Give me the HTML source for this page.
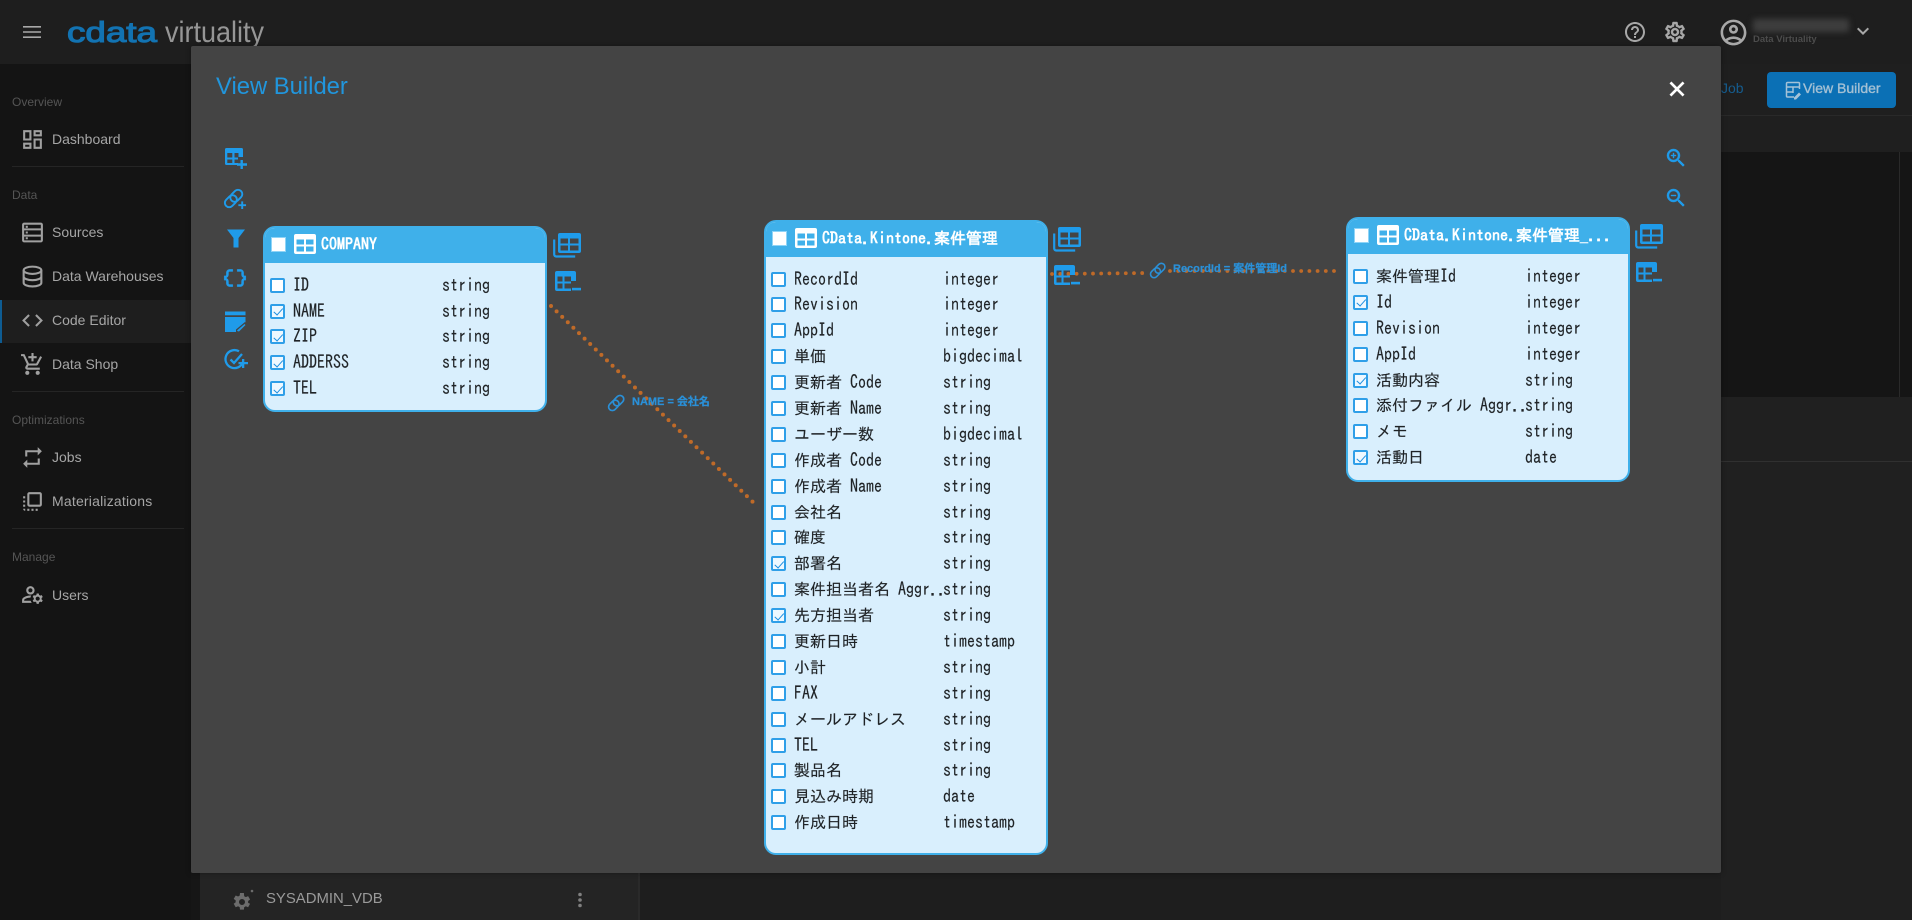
<!DOCTYPE html>
<html lang="ja"><head><meta charset="utf-8"><title>View Builder</title>
<style>
html,body{margin:0;padding:0;width:1912px;height:920px;overflow:hidden;background:#202020;font-family:"Liberation Sans","Noto Sans CJK JP",sans-serif}
.a{position:absolute}
svg{display:block;overflow:visible}
#side div.t{position:absolute;left:52px;font-size:14px;line-height:20px;color:#a6a6a6;white-space:nowrap}
#side div.h{position:absolute;left:12px;font-size:12px;line-height:16px;color:#555;white-space:nowrap}
#side div.s{position:absolute;left:12px;width:172px;height:1px;background:#252525}
#side svg{position:absolute;left:20px;margin-top:-.5px;width:25px;height:25px;fill:#a0a0a0}
.tb{position:absolute;box-sizing:border-box;width:284px;background:#d9effd;border:2.5px solid #3fb0ea;border-radius:12px;font-family:"WenQuanYi Zen Hei Mono","IPAGothic","Noto Sans CJK JP",monospace;font-size:16px;color:#1f2326;overflow:hidden;-webkit-text-stroke:.15px #1f2326}
.hd{position:absolute;left:-3px;right:-3px;top:-3px;height:37.5px;background:#3fb0ea;color:#fff;font-weight:bold;line-height:36px;white-space:nowrap;-webkit-text-stroke:0}
.hd b{position:absolute;left:59px;top:1px}
.hd i{position:absolute;left:9px;top:12px;width:13px;height:13px;background:#fff;border:1px solid #8fd4f7;box-sizing:content-box}
.hd svg{position:absolute;left:32px;top:9px}
.r{position:relative;height:25.9px;line-height:25.9px;white-space:nowrap}
.r u{text-decoration:none;position:absolute;left:28px;top:0}
.r em{font-style:normal;position:absolute;left:177px;top:0;transform:scaleY(1.14)}
.r u.l{transform:scaleY(1.14)}
.r s{text-decoration:none;display:inline-block;transform:scaleY(1.14)}
.k{position:absolute;left:5px;top:5px;width:11px;height:11px;border:2px solid #2f9fe8;border-radius:2px;background:#fff}
.k.on{background:#eef8ff}
.k.on::after{content:"";position:absolute;left:3.5px;top:.5px;width:3.5px;height:7.5px;border-right:1.7px solid #1e8fe0;border-bottom:1.7px solid #1e8fe0;transform:rotate(42deg)}
.lb{position:absolute;font-size:11px;font-weight:bold;color:#2a90d8;white-space:nowrap;line-height:14px;-webkit-text-stroke:.25px #2a90d8}
</style></head><body>

<svg width="0" height="0" style="position:absolute"><defs>
<symbol id="grid" viewBox="0 0 22 20"><path fill="currentColor" fill-rule="evenodd" d="M2 0h18a2 2 0 0 1 2 2v16a2 2 0 0 1-2 2H2a2 2 0 0 1-2-2V2a2 2 0 0 1 2-2zM2.500 5.500v5h7.500v-5zM12 5.500v5h7.500v-5zM2.500 12.500v5h7.500v-5zM12 12.500v5h7.500v-5z"/></symbol>
<symbol id="copyt" viewBox="0 0 28 25"><path d="M1.200 6.500V21.500a2 2 0 0 0 2 2h19" fill="none" stroke="currentColor" stroke-width="2.200"/><path fill="currentColor" fill-rule="evenodd" d="M7 0h19a2 2 0 0 1 2 2v16a2 2 0 0 1-2 2H7a2 2 0 0 1-2-2V2a2 2 0 0 1 2-2zM7.500 5.500v5h7.500v-5zM17 5.500v5h8.500v-5zM7.500 12.500v5h7.500v-5zM17 12.500v5h8.500v-5z"/></symbol>
<symbol id="mint" viewBox="0 0 26 20"><path fill="currentColor" fill-rule="evenodd" d="M2 0h17a2 2 0 0 1 2 2v8h-5v-4.500h-6.500v5H16v2h-6.500v5H16V20H2a2 2 0 0 1-2-2V2a2 2 0 0 1 2-2zM2.500 5.500v5h5v-5zM2.500 12.500v5h5v-5z"/><path d="M17 16.800h9v2.600h-9z" fill="currentColor"/></symbol>
<symbol id="lnk" viewBox="0 0 24 24"><g fill="none" stroke="currentColor" stroke-width="2" transform="rotate(-45 11 12)"><rect x="0" y="7.500" width="14" height="9" rx="4.500"/><rect x="8" y="7.500" width="14" height="9" rx="4.500"/></g></symbol>
</defs></svg>

<!-- top bar -->
<div class="a" style="left:0;top:0;width:1912px;height:64px;background:#1e1e1e"></div>
<svg class="a" style="left:23px;top:26px" width="18" height="12"><path d="M0 .8h18M0 6h18M0 11.200h18" stroke="#a8a8a8" stroke-width="1.600"/></svg>
<svg class="a" style="left:64px;top:16px" width="204" height="34">
<text x="3" y="26" font-family="'Liberation Sans',sans-serif" font-size="29" fill="#1273b2" stroke="#1273b2" stroke-width="1.100" textLength="90" lengthAdjust="spacingAndGlyphs">cdata</text>
<text x="101" y="26" font-family="'Liberation Sans',sans-serif" font-size="30" fill="#969696" textLength="99" lengthAdjust="spacingAndGlyphs">virtuality</text></svg>
<svg class="a" style="left:1623px;top:20px;fill:#a8a8a8" width="24" height="24" viewBox="0 0 24 24"><path d="M11 18h2v-2h-2v2zm1-16C6.480 2 2 6.480 2 12s4.480 10 10 10 10-4.480 10-10S17.520 2 12 2zm0 18c-4.410 0-8-3.590-8-8s3.590-8 8-8 8 3.590 8 8-3.590 8-8 8zm0-14c-2.210 0-4 1.790-4 4h2c0-1.100.9-2 2-2s2 .9 2 2c0 2-3 1.750-3 5h2c0-2.250 3-2.500 3-5 0-2.210-1.790-4-4-4z"/></svg>
<svg class="a" style="left:1663px;top:20px;fill:#a8a8a8;stroke:#a8a8a8;stroke-width:.4" width="24" height="24" viewBox="0 0 24 24"><path d="M19.430 12.980c.04-.32.07-.64.07-.98 0-.34-.03-.66-.07-.98l2.110-1.650c.19-.15.24-.42.12-.64l-2-3.460c-.09-.16-.26-.25-.44-.25-.06 0-.12.01-.17.03l-2.490 1c-.52-.4-1.080-.73-1.690-.98l-.38-2.650C14.460 2.180 14.250 2 14 2h-4c-.25 0-.46.18-.49.42l-.38 2.650c-.61.25-1.170.59-1.690.98l-2.490-1c-.06-.02-.12-.03-.18-.03-.17 0-.34.09-.43.25l-2 3.460c-.13.22-.07.49.12.64l2.110 1.650c-.04.32-.07.65-.07.98 0 .33.03.66.07.98l-2.110 1.650c-.19.15-.24.42-.12.64l2 3.460c.09.16.26.25.44.25.06 0 .12-.01.17-.03l2.490-1c.52.4 1.080.73 1.690.98l.38 2.650c.03.24.24.42.49.42h4c.25 0 .46-.18.49-.42l.38-2.650c.61-.25 1.170-.59 1.690-.98l2.490 1c.06.02.12.03.18.03.17 0 .34-.09.43-.25l2-3.460c.12-.22.07-.49-.12-.64l-2.110-1.650zm-1.980-1.710c.04.31.05.52.05.73 0 .21-.02.43-.05.73l-.14 1.130.89.7 1.080.84-.7 1.210-1.270-.51-1.040-.42-.9.68c-.43.32-.84.56-1.250.73l-1.060.43-.16 1.130-.2 1.350h-1.400l-.19-1.350-.16-1.130-1.060-.43c-.43-.18-.83-.41-1.230-.71l-.91-.7-1.060.43-1.270.51-.7-1.210 1.080-.84.89-.7-.14-1.130c-.03-.31-.05-.54-.05-.74s.02-.43.05-.73l.14-1.130-.89-.7-1.080-.84.7-1.210 1.270.51 1.040.42.9-.68c.43-.32.84-.56 1.250-.73l1.060-.43.16-1.130.2-1.350h1.390l.19 1.350.16 1.130 1.060.43c.43.18.83.41 1.230.71l.91.7 1.060-.43 1.270-.51.7 1.210-1.070.85-.89.7.14 1.130zM12 8c-2.210 0-4 1.790-4 4s1.790 4 4 4 4-1.790 4-4-1.790-4-4-4zm0 6c-1.100 0-2-.9-2-2s.9-2 2-2 2 .9 2 2-.9 2-2 2z"/></svg>
<svg class="a" style="left:1718px;top:17px;fill:#a8a8a8" width="31" height="31" viewBox="0 0 24 24"><path d="M12 2C6.480 2 2 6.480 2 12s4.480 10 10 10 10-4.480 10-10S17.520 2 12 2zM7.350 18.500C8.660 17.560 10.260 17 12 17s3.340.56 4.650 1.500c-1.310.94-2.910 1.500-4.650 1.500s-3.340-.56-4.650-1.500zm10.790-1.380C16.450 15.800 14.320 15 12 15s-4.450.8-6.140 2.120C4.700 15.730 4 13.950 4 12c0-4.420 3.580-8 8-8s8 3.580 8 8c0 1.950-.7 3.730-1.860 5.120zM12 6c-1.930 0-3.500 1.570-3.500 3.500S10.070 13 12 13s3.500-1.570 3.500-3.500S13.930 6 12 6zm0 5c-.83 0-1.500-.67-1.500-1.500S11.170 8 12 8s1.500.67 1.500 1.500S12.830 11 12 11z"/></svg>
<div class="a" style="left:1753px;top:19px;width:96px;height:13px;background:#3e3e3e;filter:blur(3px)"></div>
<div class="a" style="left:1753px;top:33px;font-size:9.500px;font-weight:bold;color:#4c4c4c;line-height:13px;white-space:nowrap">Data Virtuality</div>
<svg class="a" style="left:1851px;top:19px;fill:#a8a8a8" width="24" height="24" viewBox="0 0 24 24"><path d="M7.410 8.590 12 13.170l4.590-4.580L18 10l-6 6-6-6z"/></svg>

<!-- sidebar -->
<div id="side" class="a" style="left:0;top:64px;width:191px;height:856px;background:#141414;">
<div class="a" style="left:0;top:236px;width:191px;height:43px;background:#1e1e1e"></div>
<div class="a" style="left:0;top:236px;width:2px;height:43px;background:#0e5c92"></div>
<div class="h" style="top:30px">Overview</div>
<svg style="top:63px" viewBox="0 0 24 24"><path d="M19 5v2h-4V5h4M9 5v6H5V5h4m10 8v6h-4v-6h4M9 17v2H5v-2h4M21 3h-8v6h8V3zM11 3H3v10h8V3zm10 8h-8v10h8V11zm-10 4H3v6h8v-6z"/></svg>
<div class="t" style="top:65px">Dashboard</div>
<div class="s" style="top:102px"></div>
<div class="h" style="top:123px">Data</div>
<svg style="top:156px" viewBox="0 0 24 24"><path fill="none" stroke="#a0a0a0" stroke-width="2" d="M4 3.500h16a1 1 0 0 1 1 1v15a1 1 0 0 1-1 1H4a1 1 0 0 1-1-1v-15a1 1 0 0 1 1-1zM3 9h18M3 15h18"/><path d="M5.500 5.500h2v2h-2zM5.500 11h2v2h-2zM5.500 16.500h2v2h-2z"/></svg>
<div class="t" style="top:158px">Sources</div>
<svg style="top:200px" viewBox="0 0 24 24"><g fill="none" stroke="#a0a0a0" stroke-width="2"><ellipse cx="12" cy="6" rx="8.500" ry="3.500"/><path d="M3.500 6v12c0 2 3.800 3.500 8.500 3.500s8.500-1.500 8.500-3.500V6M3.500 12c0 2 3.800 3.500 8.500 3.500s8.500-1.500 8.500-3.500"/></g></svg>
<div class="t" style="top:202px">Data Warehouses</div>
<svg style="top:244px" viewBox="0 0 24 24"><path d="M9.400 16.600 4.800 12l4.600-4.600L8 6l-6 6 6 6 1.400-1.400zm5.200 0 4.600-4.600-4.600-4.600L16 6l6 6-6 6-1.400-1.400z"/></svg>
<div class="t" style="top:246px">Code Editor</div>
<svg style="top:288px" viewBox="0 0 24 24"><path d="M11 9h2V6h3V4h-3V1h-2v3H8v2h3v3zm-4 9c-1.100 0-1.990.9-1.990 2S5.900 22 7 22s2-.9 2-2-.9-2-2-2zm10 0c-1.100 0-1.990.9-1.990 2s.89 2 1.990 2 2-.9 2-2-.9-2-2-2zm-9.830-3.250.03-.12.9-1.630h7.450c.75 0 1.410-.41 1.750-1.030l3.860-7.010L19.420 4h-.01l-1.100 2-2.760 5H8.530l-.13-.27L6.160 6l-.95-2-.94-2H1v2h2l3.600 7.590-1.350 2.450c-.16.28-.25.61-.25.96 0 1.100.9 2 2 2h12v-2H7.420c-.13 0-.25-.11-.25-.25z"/></svg>
<div class="t" style="top:290px">Data Shop</div>
<div class="s" style="top:327px"></div>
<div class="h" style="top:348px">Optimizations</div>
<svg style="top:381px" viewBox="0 0 24 24"><path d="M7 7h10v3l4-4-4-4v3H5v6h2V7zm10 10H7v-3l-4 4 4 4v-3h12v-6h-2v4z"/></svg>
<div class="t" style="top:383px">Jobs</div>
<svg style="top:425px" viewBox="0 0 24 24"><path d="M3 13h2v-2H3v2zm0 4h2v-2H3v2zm2 4v-2H3c0 1.100.89 2 2 2zM3 9h2V7H3v2zm12 12h2v-2h-2v2zm4-18H9c-1.110 0-2 .9-2 2v10c0 1.100.89 2 2 2h10c1.100 0 2-.9 2-2V5c0-1.100-.9-2-2-2zm0 12H9V5h10v10zm-8 6h2v-2h-2v2zm-4 0h2v-2H7v2z"/></svg>
<div class="t" style="top:427px;letter-spacing:.2px">Materializations</div>
<div class="s" style="top:464px"></div>
<div class="h" style="top:485px">Manage</div>
<svg style="top:518px" viewBox="0 0 24 24"><path d="M4 18v-.65c0-.34.16-.66.41-.81C6.100 15.530 8.030 15 10 15c.03 0 .05 0 .08.01.1-.7.3-1.370.59-1.980-.22-.02-.44-.03-.67-.03-2.420 0-4.680.67-6.610 1.820-.88.52-1.390 1.500-1.390 2.530V20h9.260c-.42-.6-.75-1.280-.97-2H4zM10 12c2.210 0 4-1.790 4-4s-1.790-4-4-4-4 1.790-4 4 1.790 4 4 4zm0-6c1.100 0 2 .9 2 2s-.9 2-2 2-2-.9-2-2 .9-2 2-2zM20.750 16c0-.22-.03-.42-.06-.63l1.140-1.010-1-1.730-1.450.49c-.32-.27-.68-.48-1.080-.63L18 11h-2l-.3 1.490c-.4.15-.76.36-1.080.63l-1.450-.49-1 1.730 1.140 1.010c-.03.21-.06.41-.06.63s.03.42.06.63l-1.140 1.010 1 1.730 1.450-.49c.32.27.68.48 1.080.63L16 21h2l.3-1.490c.4-.15.76-.36 1.080-.63l1.450.49 1-1.730-1.140-1.010c.03-.21.06-.41.06-.63zM17 18c-1.100 0-2-.9-2-2s.9-2 2-2 2 .9 2 2-.9 2-2 2z"/></svg>
<div class="t" style="top:521px">Users</div>
</div>

<!-- background right -->
<div class="a" style="left:1721px;top:64px;width:191px;height:88px;background:#1f1f1f"></div>
<div class="a" style="left:1721px;top:115px;width:191px;height:1px;background:#292929"></div>
<div class="a" style="left:1721px;top:152px;width:191px;height:245px;background:#151515"></div>
<div class="a" style="left:1899px;top:152px;width:1px;height:247px;background:#2a2a2a"></div>
<div class="a" style="left:1721px;top:397px;width:191px;height:523px;background:#202020"></div>
<div class="a" style="left:1721px;top:461px;width:191px;height:1px;background:#303030"></div>
<div class="a" style="left:1721px;top:78px;font-size:14px;line-height:20px;color:#155c8e;white-space:nowrap;width:22px;overflow:visible">Job</div>
<div class="a" style="left:1767px;top:72px;width:129px;height:36px;background:#0b70b5;border-radius:4px"></div>
<svg class="a" style="left:1785px;top:81px" width="17" height="19" viewBox="0 0 17 19"><path d="M9 16H2.500a1 1 0 0 1-1-1V2.500a1 1 0 0 1 1-1h11a1 1 0 0 1 1 1V8M1.500 6h13M1.500 11h7M8 6v6" fill="none" stroke="#a5c3d8" stroke-width="1.500"/><path d="M9 16.500l5-5 2 2-5 5H9z" fill="#a5c3d8"/></svg>
<div class="a" style="left:1803px;top:77px;font-size:14px;line-height:22px;color:#a4c0d4;white-space:nowrap;-webkit-text-stroke:.35px #a4c0d4">View Builder</div>

<!-- background bottom -->
<div class="a" style="left:191px;top:873px;width:9px;height:47px;background:#161616"></div>
<div class="a" style="left:200px;top:873px;width:438px;height:47px;background:#242424"></div>
<div class="a" style="left:638px;top:873px;width:1083px;height:47px;background:#1e1e1e;border-left:2px solid #2a2a2a;box-sizing:border-box"></div>
<svg class="a" style="left:232px;top:887px;fill:#6c6c6c" width="24" height="26" viewBox="0 0 24 24"><path d="M19.100 13.900c.1-.6.100-1.300 0-1.900l2-1.500-2-3.400-2.300 1c-.5-.4-1-.7-1.600-.9L14.900 4H11l-.3 2.600c-.6.2-1.100.5-1.600.9l-2.400-1-2 3.400 2 1.500c-.1.600-.1 1.300 0 1.900l-2 1.500 2 3.400 2.400-1c.5.4 1 .7 1.600.9l.3 2.500h3.900l.3-2.500c.6-.2 1.100-.5 1.600-.9l2.300 1 2-3.400zM13 16a3 3 0 1 1 0-6 3 3 0 0 1 0 6z" transform="translate(-3 1)"/><circle cx="20" cy="3" r="1.300"/></svg>
<div class="a" style="left:266px;top:890px;font-size:14.900px;line-height:18px;color:#9a9a9a;white-space:nowrap">SYSADMIN_VDB</div>
<svg class="a" style="left:578px;top:892px;fill:#808080" width="4" height="16"><circle cx="2" cy="2.500" r="1.800"/><circle cx="2" cy="8" r="1.800"/><circle cx="2" cy="13.500" r="1.800"/></svg>

<!-- modal -->
<div class="a" style="left:191px;top:46px;width:1530px;height:827px;background:#444;border-radius:2px;box-shadow:0 0 6px rgba(0,0,0,.35)"></div>
<div class="a" style="left:216px;top:72px;font-size:23.800px;line-height:30px;color:#2196dd;white-space:nowrap">View Builder</div>
<svg class="a" style="left:1665px;top:77px;fill:#fff;stroke:#fff;stroke-width:.7" width="24" height="24" viewBox="0 0 24 24"><path d="M19 6.410 17.590 5 12 10.590 6.410 5 5 6.410 10.590 12 5 17.590 6.410 19 12 13.410 17.590 19 19 17.590 13.410 12z"/></svg>

<!-- relationship lines -->
<svg class="a" style="left:0;top:0" width="1912" height="920">
<path d="M551 306L755 504" stroke="#bf6a28" stroke-width="4" stroke-linecap="round" stroke-dasharray="0 7.800" fill="none"/>
<path d="M1052 274L1150 273M1170 271L1336 271" stroke="#bf6a28" stroke-width="3.800" stroke-linecap="round" stroke-dasharray="0 8.200" fill="none"/>
</svg>
<svg class="a" style="left:607px;top:393px;color:#2a90d8" width="20" height="20"><use href="#lnk"/></svg>
<svg class="a" style="left:1149px;top:261px;color:#2a90d8" width="19" height="19"><use href="#lnk"/></svg>
<div class="lb" style="left:632px;top:395px">NAME = 会社名</div>
<div class="lb" style="left:1173px;top:262px">RecordId = 案件管理Id</div>

<!-- left tools -->
<svg class="a" style="left:225px;top:148px;color:#1f9bea" width="22" height="21" viewBox="0 0 22 21"><path fill="currentColor" fill-rule="evenodd" d="M1.500 0h15a1.500 1.500 0 0 1 1.500 1.500V9h-4.500V5H9.500v4.500H13v2H9.500V15H13v2H1.500A1.500 1.500 0 0 1 0 15.500V1.500A1.500 1.500 0 0 1 1.500 0zM2.300 5v4.500h5V5zM2.300 11.500V15h5v-3.500z"/><path d="M15.500 12h2.400v3.300H22v2.400h-4.100V21h-2.400v-3.300H12v-2.400h3.500z" fill="currentColor"/></svg>
<svg class="a" style="left:224px;top:187px;color:#1f9bea" width="23" height="23" viewBox="0 0 24 24"><g fill="none" stroke="currentColor" stroke-width="2" transform="rotate(-45 10 12)"><rect x="-1" y="7.500" width="14" height="9" rx="4.500"/><rect x="7" y="7.500" width="14" height="9" rx="4.500"/></g><path d="M18 15h2v3h3v2h-3v3h-2v-3h-3v-2h3z" fill="currentColor"/></svg>
<svg class="a" style="left:226px;top:229px;fill:#1f9bea" width="20" height="19" viewBox="0 0 20 19"><path d="M1 .5h18L12.500 9v9.500h-5V9z"/></svg>
<svg class="a" style="left:222px;top:265px;fill:#1f9bea;stroke:#1f9bea;stroke-width:.3" width="26" height="26" viewBox="0 0 24 24"><path d="M4 7v2c0 .55-.45 1-1 1H2v4h1c.55 0 1 .45 1 1v2c0 1.650 1.350 3 3 3h3v-2H7c-.55 0-1-.45-1-1v-2c0-1.300-.84-2.420-2-2.830v-.34C5.160 11.420 6 10.300 6 9V7c0-.55.45-1 1-1h3V4H7C5.350 4 4 5.350 4 7zM21 10c-.55 0-1-.45-1-1V7c0-1.650-1.350-3-3-3h-3v2h3c1.650 0 1 .45 1 1v2c0 1.300.84 2.420 2 2.830v.34c-1.160.41-2 1.520-2 2.830v2c0 .55-.45 1-1 1h-3v2h3c1.650 0 3-1.350 3-3v-2c0-.55.45-1 1-1h1v-4h-1z"/></svg>
<svg class="a" style="left:224px;top:310px" width="23" height="23" viewBox="0 0 23 23"><path d="M1 1.500h20.500v12L13 22H1z" fill="#1f9bea"/><path d="M1 5.200h20.500V7H1z" fill="#444"/><path d="M21 12l2 2-8 8h-3v-2.500z" fill="#444"/><path d="M20.500 14l1 1-6.500 6.500-2-.5.500-1z" fill="#1f9bea"/></svg>
<svg class="a" style="left:224px;top:348px" width="24" height="23" viewBox="0 0 24 23"><path d="M15 3.300A9 9 0 1 0 19 14" fill="none" stroke="#1f9bea" stroke-width="2.300"/><path d="M6.500 11.500l3.500 3.500 8-9" fill="none" stroke="#1f9bea" stroke-width="2.300"/><path d="M18 11h2.300v3H24v2.300h-3.700V20H18v-3.700h-3.500V14H18z" fill="#1f9bea"/></svg>

<!-- right zoom tools -->
<svg class="a" style="left:1664px;top:146px;fill:#1f9bea;stroke:#1f9bea;stroke-width:.4" width="24" height="24" viewBox="0 0 24 24"><path d="M15.500 14h-.79l-.28-.27C15.410 12.590 16 11.110 16 9.500 16 5.910 13.090 3 9.500 3S3 5.910 3 9.500 5.910 16 9.500 16c1.610 0 3.090-.59 4.230-1.570l.27.28v.79l5 4.990L20.490 19l-4.990-5zm-6 0C7.010 14 5 11.990 5 9.500S7.010 5 9.500 5 14 7.010 14 9.500 11.990 14 9.500 14zM12 10h-2v2H9v-2H7V9h2V7h1v2h2v1z"/></svg>
<svg class="a" style="left:1664px;top:186px;fill:#1f9bea;stroke:#1f9bea;stroke-width:.4" width="24" height="24" viewBox="0 0 24 24"><path d="M15.500 14h-.79l-.28-.27C15.410 12.590 16 11.110 16 9.500 16 5.910 13.090 3 9.500 3S3 5.910 3 9.500 5.910 16 9.500 16c1.610 0 3.090-.59 4.230-1.570l.27.28v.79l5 4.990L20.490 19l-4.990-5zm-6 0C7.010 14 5 11.990 5 9.500S7.010 5 9.500 5 14 7.010 14 9.500 11.990 14 9.500 14zM7 9h5v1H7z"/></svg>

<!-- table 1 -->
<div class="tb" style="left:263px;top:226px;height:186px;padding-top:44.700px">
<div class="hd"><i></i><svg width="22" height="20" style="color:#fff"><use href="#grid"/></svg><b>COMPANY</b></div>
<div class="r"><span class="k"></span><u class="l">ID</u><em>string</em></div>
<div class="r"><span class="k on"></span><u class="l">NAME</u><em>string</em></div>
<div class="r"><span class="k on"></span><u class="l">ZIP</u><em>string</em></div>
<div class="r"><span class="k on"></span><u class="l">ADDERSS</u><em>string</em></div>
<div class="r"><span class="k on"></span><u class="l">TEL</u><em>string</em></div>
</div>
<!-- table 2 -->
<div class="tb" style="left:764px;top:220px;height:635px;padding-top:44.500px">
<div class="hd"><i></i><svg width="22" height="20" style="color:#fff"><use href="#grid"/></svg><b>CData.Kintone.案件管理</b></div>
<div class="r"><span class="k"></span><u class="l">RecordId</u><em>integer</em></div>
<div class="r"><span class="k"></span><u class="l">Revision</u><em>integer</em></div>
<div class="r"><span class="k"></span><u class="l">AppId</u><em>integer</em></div>
<div class="r"><span class="k"></span><u>単価</u><em>bigdecimal</em></div>
<div class="r"><span class="k"></span><u>更新者 <s>Code</s></u><em>string</em></div>
<div class="r"><span class="k"></span><u>更新者 <s>Name</s></u><em>string</em></div>
<div class="r"><span class="k"></span><u>ユーザー数</u><em>bigdecimal</em></div>
<div class="r"><span class="k"></span><u>作成者 <s>Code</s></u><em>string</em></div>
<div class="r"><span class="k"></span><u>作成者 <s>Name</s></u><em>string</em></div>
<div class="r"><span class="k"></span><u>会社名</u><em>string</em></div>
<div class="r"><span class="k"></span><u>確度</u><em>string</em></div>
<div class="r"><span class="k on"></span><u>部署名</u><em>string</em></div>
<div class="r"><span class="k"></span><u>案件担当者名 <s>Aggr..</s></u><em>string</em></div>
<div class="r"><span class="k on"></span><u>先方担当者</u><em>string</em></div>
<div class="r"><span class="k"></span><u>更新日時</u><em>timestamp</em></div>
<div class="r"><span class="k"></span><u>小計</u><em>string</em></div>
<div class="r"><span class="k"></span><u class="l">FAX</u><em>string</em></div>
<div class="r"><span class="k"></span><u>メールアドレス</u><em>string</em></div>
<div class="r"><span class="k"></span><u class="l">TEL</u><em>string</em></div>
<div class="r"><span class="k"></span><u>製品名</u><em>string</em></div>
<div class="r"><span class="k"></span><u>見込み時期</u><em>date</em></div>
<div class="r"><span class="k"></span><u>作成日時</u><em>timestamp</em></div>
</div>
<!-- table 3 -->
<div class="tb" style="left:1346px;top:217px;height:265px;padding-top:45px">
<div class="hd"><i></i><svg width="22" height="20" style="color:#fff"><use href="#grid"/></svg><b>CData.Kintone.案件管理_...</b></div>
<div class="r"><span class="k"></span><u>案件管理<s>Id</s></u><em>integer</em></div>
<div class="r"><span class="k on"></span><u class="l">Id</u><em>integer</em></div>
<div class="r"><span class="k"></span><u class="l">Revision</u><em>integer</em></div>
<div class="r"><span class="k"></span><u class="l">AppId</u><em>integer</em></div>
<div class="r"><span class="k on"></span><u>活動内容</u><em>string</em></div>
<div class="r"><span class="k"></span><u>添付ファイル <s>Aggr..</s></u><em>string</em></div>
<div class="r"><span class="k"></span><u>メモ</u><em>string</em></div>
<div class="r"><span class="k on"></span><u>活動日</u><em>date</em></div>
</div>

<!-- table side icons -->
<svg class="a" style="left:553px;top:233px;color:#1f9bea" width="28" height="25"><use href="#copyt"/></svg>
<svg class="a" style="left:555px;top:271px;color:#1f9bea" width="26" height="20"><use href="#mint"/></svg>
<svg class="a" style="left:1053px;top:227px;color:#1f9bea" width="28" height="25"><use href="#copyt"/></svg>
<svg class="a" style="left:1054px;top:265px;color:#1f9bea" width="26" height="20"><use href="#mint"/></svg>
<svg class="a" style="left:1635px;top:224px;color:#1f9bea" width="28" height="25"><use href="#copyt"/></svg>
<svg class="a" style="left:1636px;top:262px;color:#1f9bea" width="26" height="20"><use href="#mint"/></svg>

</body></html>
